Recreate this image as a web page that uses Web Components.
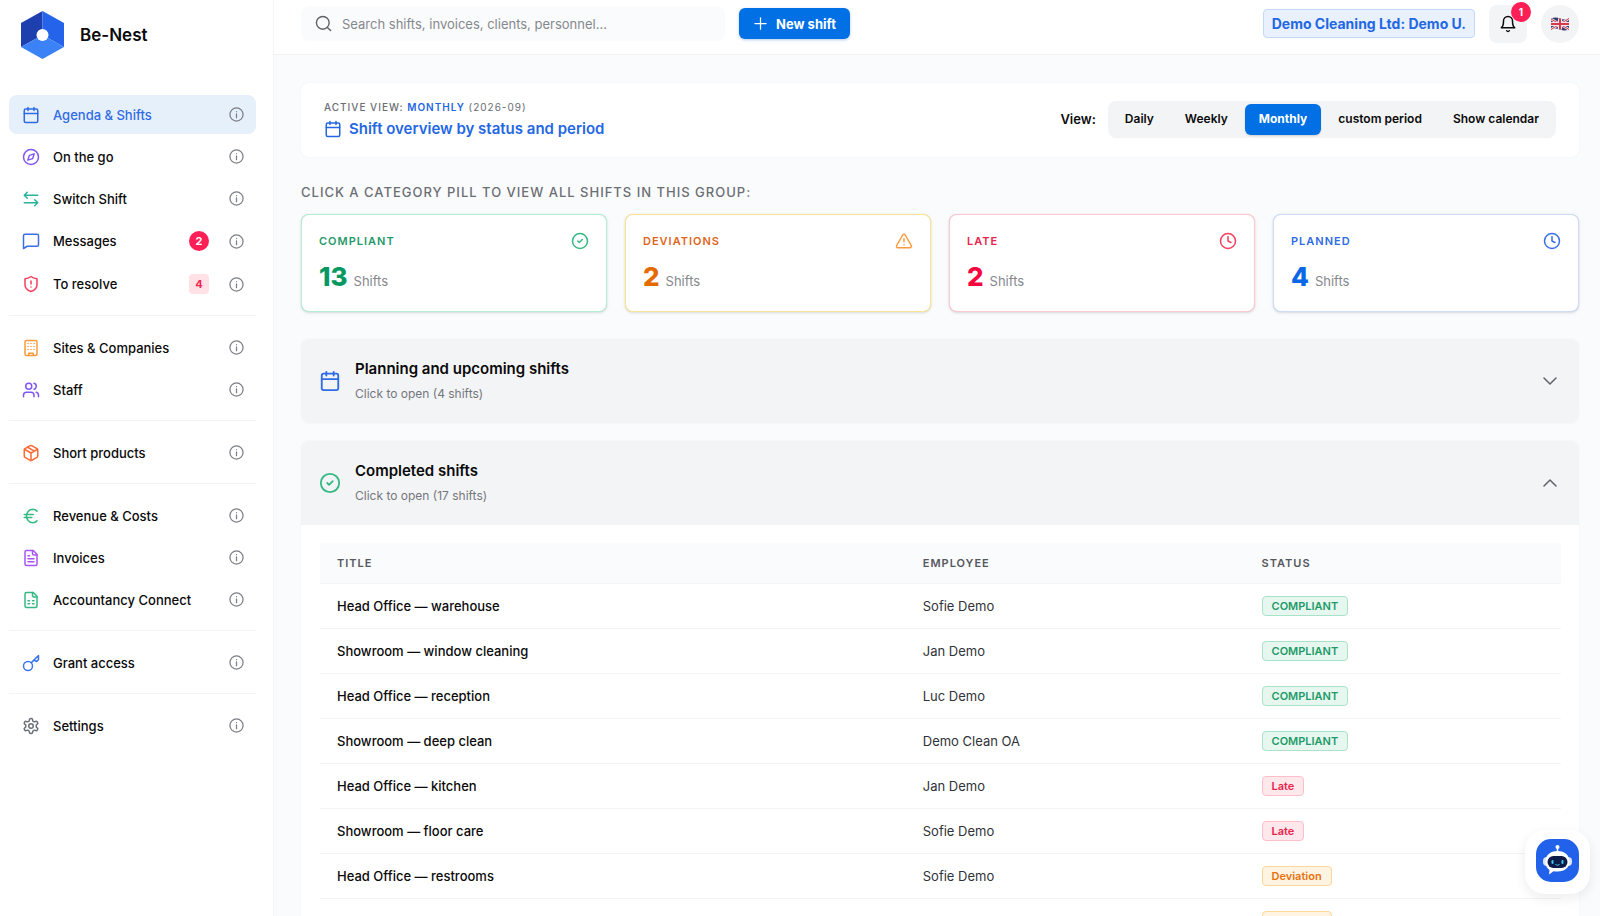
<!DOCTYPE html>
<html lang="en">
<head>
<meta charset="utf-8">
<meta name="viewport" content="width=device-width, initial-scale=1">
<title>Be-Nest</title>
<style>
  html, body {
    margin: 0;
    height: 100%;
  }

  body {
    font-family: Inter, "Liberation Sans", sans-serif;
    font-size: 13px;
    color: #0a0a0a;
    background: #fafbfc;
    overflow: hidden;
  }
</style>
</head>
<body>
<benest-app></benest-app>

<script>
const icons = {
  calendar: '<rect x="3" y="4" width="18" height="18" rx="2"/><path d="M3 10h18M8 2v4M16 2v4"/>',
  compass: '<circle cx="12" cy="12" r="10"/><path d="m16.200 7.800-2 6.400-6.400 2 2-6.400z"/>',
  swap: '<path d="M21 7H3m4-4L3 7l4 4M3 17h18m-4-4 4 4-4 4"/>',
  message: '<path d="M22 17a2 2 0 0 1-2 2H7l-5 3V5a2 2 0 0 1 2-2h16a2 2 0 0 1 2 2z"/>',
  shield: '<path d="M20 13c0 5-3.500 7.500-8 9-4.500-1.500-8-4-8-9V5c3 0 6-1.500 8-3 2 1.500 5 3 8 3z"/><path d="M12 8v4M12 16h.01"/>',
  building: '<rect x="4" y="2" width="16" height="20" rx="2"/><path d="M9 22v-3h6v3M8 6h.01M12 6h.01M16 6h.01M8 10h.01M12 10h.01M16 10h.01M8 14h.01M12 14h.01M16 14h.01"/>',
  users: '<path d="M16 21v-2a4 4 0 0 0-4-4H6a4 4 0 0 0-4 4v2"/><circle cx="9" cy="7" r="4"/><path d="M22 21v-2a4 4 0 0 0-3-3.870M16 3.130a4 4 0 0 1 0 7.750"/>',
  box: '<path d="M21 16V8a2 2 0 0 0-1-1.730l-7-4a2 2 0 0 0-2 0l-7 4A2 2 0 0 0 3 8v8a2 2 0 0 0 1 1.730l7 4a2 2 0 0 0 2 0l7-4A2 2 0 0 0 21 16z"/><path d="m3.300 7 8.700 5 8.700-5M12 22V12M7.500 4.300l9 5.100"/>',
  euro: '<path d="M3 10h12M3 14h10M20 5.500A8.500 8.500 0 0 0 14.500 3C9.500 3 6 7 6 12s3.500 9 8.500 9c2.200 0 4-.9 5.500-2.500"/>',
  file: '<path d="M15 2H6a2 2 0 0 0-2 2v16a2 2 0 0 0 2 2h12a2 2 0 0 0 2-2V7z"/><path d="M14 2v4a2 2 0 0 0 2 2h4M8 9h2M8 13h8M8 17h8"/>',
  sheet: '<path d="M15 2H6a2 2 0 0 0-2 2v16a2 2 0 0 0 2 2h12a2 2 0 0 0 2-2V7z"/><path d="M14 2v4a2 2 0 0 0 2 2h4M8 13h2M14 13h2M8 17h2M14 17h2"/>',
  key: '<circle cx="8" cy="16" r="6"/><path d="M12.500 11.500 22 2v5.500l-2.500 2.500-3.500-2"/>',
  gear: '<path d="M12.220 2h-.44a2 2 0 0 0-2 2v.18a2 2 0 0 1-1 1.730l-.43.25a2 2 0 0 1-2 0l-.15-.08a2 2 0 0 0-2.730.73l-.22.38a2 2 0 0 0 .73 2.730l.15.1a2 2 0 0 1 1 1.720v.51a2 2 0 0 1-1 1.740l-.15.09a2 2 0 0 0-.73 2.730l.22.38a2 2 0 0 0 2.730.73l.15-.08a2 2 0 0 1 2 0l.43.25a2 2 0 0 1 1 1.730V20a2 2 0 0 0 2 2h.44a2 2 0 0 0 2-2v-.18a2 2 0 0 1 1-1.730l.43-.25a2 2 0 0 1 2 0l.15.08a2 2 0 0 0 2.730-.73l.22-.39a2 2 0 0 0-.73-2.730l-.15-.08a2 2 0 0 1-1-1.740v-.5a2 2 0 0 1 1-1.740l.15-.09a2 2 0 0 0 .73-2.730l-.22-.38a2 2 0 0 0-2.730-.73l-.15.08a2 2 0 0 1-2 0l-.43-.25a2 2 0 0 1-1-1.730V4a2 2 0 0 0-2-2z"/><circle cx="12" cy="12" r="3"/>',
  info: '<circle cx="12" cy="12" r="10.500"/><path d="M12 17v-6M12 7.500h.01"/>',
  search: '<circle cx="11" cy="11" r="9"/><path d="m22 22-4.500-4.500"/>',
  plus: '<path d="M3 12h18M12 3v18"/>',
  bell: '<path d="M6 8a6 6 0 0 1 12 0c0 7 3 9 3 9H3s3-2 3-9M10.300 21a1.940 1.940 0 0 0 3.400 0"/>',
  check: '<circle cx="12" cy="12" r="10"/><path d="m9 12 2 2 4-4"/>',
  warning: '<path d="m21.730 18-8-14a2 2 0 0 0-3.480 0l-8 14A2 2 0 0 0 4 21h16a2 2 0 0 0 1.730-3z"/><path d="M12 9v4M12 17h.01"/>',
  clock: '<circle cx="12" cy="12" r="10"/><path d="M12 6v6l4 2"/>',
  down: '<path d="m4 8 8 8 8-8"/>',
  up: '<path d="m4 16 8-8 8 8"/>'
};

class BenestIcon extends HTMLElement {
  constructor() {
    super();
    this.attachShadow({ mode: "open" });
  }

  connectedCallback() {
    const size = this.getAttribute("size") || 18;
    const weight = this.getAttribute("weight") || 2;
    this.shadowRoot.innerHTML = `
      <style>
        :host { display: inline-flex; flex: none; }
        svg { display: block; }
      </style>
      <svg width="${size}" height="${size}" viewBox="0 0 24 24" fill="none" stroke="currentColor"
        stroke-width="${weight}" stroke-linecap="round" stroke-linejoin="round" aria-hidden="true">
        ${icons[this.getAttribute("name")]}
      </svg>`;
  }
}

class NavItem extends HTMLElement {
  constructor() {
    super();
    this.attachShadow({ mode: "open" });
  }

  connectedCallback() {
    const tint = this.getAttribute("tint");
    this.shadowRoot.innerHTML = `
      <style>
        :host { display: block; }
        .row {
          display: flex;
          align-items: center;
          gap: 20px;
          min-height: 39px;
          padding: 0 12px 0 13px;
          border-radius: 8px;
        }
        :host([active]) .row { background: #e6f0fb; }
        :host([active]) a { color: #2f6be4; }
        :host([tall]) .row { min-height: 40px; }
        a {
          flex: 1;
          display: flex;
          align-items: center;
          gap: 13px;
          color: inherit;
          font-weight: 500;
          text-decoration: none;
        }
        button {
          display: flex;
          border: 0;
          padding: 0;
          background: none;
          color: #7c7f85;
        }
      </style>
      <div class="row">
        <a href="#"><benest-icon name="${this.getAttribute("icon")}" style="color:${tint}"></benest-icon><slot></slot></a>
        <slot name="badge"></slot>
        <button aria-label="More information"><benest-icon name="info" size="15"></benest-icon></button>
      </div>`;
  }
}

class SideBar extends HTMLElement {
  constructor() {
    super();
    this.attachShadow({ mode: "open" });
    this.shadowRoot.innerHTML = `
      <style>
        :host {
          display: block;
          box-sizing: border-box;
          background: #fff;
          border-right: 1px solid #f3f4f6;
          padding: 10px 17px 0 9px;
        }
        .brand {
          display: flex;
          align-items: center;
          gap: 16px;
          padding: 0 12px;
          margin-bottom: 35px;
          font-size: 17px;
          font-weight: 600;
        }
        nav {
          display: flex;
          flex-direction: column;
          gap: 3px;
        }
        hr {
          width: 100%;
          height: 1px;
          margin: 8px 0 9px;
          border: 0;
          background: #f3f4f6;
        }
        .dot, .tag {
          height: 20px;
          min-width: 20px;
          line-height: 20px;
          text-align: center;
          font-size: 11px;
          font-weight: 700;
        }
        .dot {
          border-radius: 10px;
          background: #ff1f57;
          color: #fff;
        }
        .tag {
          border-radius: 4px;
          background: #ffe1e6;
          color: #f0284f;
        }
      </style>
      <div class="brand">
        <svg width="43" height="50" viewBox="0 0 43 50" aria-hidden="true">
          <path d="M21.500 1 0 13v24l21.500-12z" fill="#1e40af"/>
          <path d="M21.500 1 43 13v24L21.500 25z" fill="#2563eb"/>
          <path d="M0 37l21.500-12L43 37 21.500 49z" fill="#3b82f6"/>
          <circle cx="21.500" cy="25" r="6" fill="#fff"/>
        </svg>
        Be-Nest
      </div>
      <nav>
        <nav-item active icon="calendar" tint="#2f6be4">Agenda &amp; Shifts</nav-item>
        <nav-item icon="compass" tint="#8257f5">On the go</nav-item>
        <nav-item icon="swap" tint="#2bb39a">Switch Shift</nav-item>
        <nav-item tall icon="message" tint="#3b6fe8">Messages<span slot="badge" class="dot">2</span></nav-item>
        <nav-item tall icon="shield" tint="#f43f5e">To resolve<span slot="badge" class="tag">4</span></nav-item>
        <hr>
        <nav-item icon="building" tint="#fb9a3c">Sites &amp; Companies</nav-item>
        <nav-item icon="users" tint="#8257f5">Staff</nav-item>
        <hr>
        <nav-item icon="box" tint="#fb6a34">Short products</nav-item>
        <hr>
        <nav-item icon="euro" tint="#34b985">Revenue &amp; Costs</nav-item>
        <nav-item icon="file" tint="#a855f7">Invoices</nav-item>
        <nav-item icon="sheet" tint="#34b985">Accountancy Connect</nav-item>
        <hr>
        <nav-item icon="key" tint="#3b76ee">Grant access</nav-item>
        <hr>
        <nav-item icon="gear" tint="#6b7078">Settings</nav-item>
      </nav>`;
  }
}

class TopBar extends HTMLElement {
  constructor() {
    super();
    this.attachShadow({ mode: "open" });
    this.shadowRoot.innerHTML = `
      <style>
        :host {
          display: flex;
          align-items: center;
          box-sizing: border-box;
          height: 55px;
          padding: 0 21px 7px 27px;
          gap: 14px;
          background: #fff;
          border-bottom: 1px solid #eff1f3;
        }
        button { font: inherit; border: 0; padding: 0; }
        label {
          display: flex;
          align-items: center;
          gap: 10px;
          box-sizing: border-box;
          width: 424px;
          height: 35px;
          padding: 0 14px;
          border-radius: 8px;
          background: #fafbfc;
          color: #5f6368;
        }
        input {
          flex: 1;
          min-width: 0;
          padding: 0;
          border: 0;
          outline: 0;
          background: none;
          font: inherit;
        }
        input::placeholder { color: #85888d; opacity: 1; }
        .new {
          display: flex;
          align-items: center;
          gap: 8px;
          height: 31px;
          padding: 0 14px;
          border-radius: 6px;
          background: #0070e4;
          color: #fff;
          font-weight: 700;
          box-shadow: 0 1px 3px rgba(0, 80, 200, .3);
        }
        .account {
          box-sizing: border-box;
          height: 29px;
          margin-left: auto;
          padding: 0 8px;
          border: 1px solid #c3d9fa;
          border-radius: 4px;
          background: #e8f1fd;
          color: #2467e3;
          font-size: 14px;
          font-weight: 700;
        }
        .bell, .lang {
          position: relative;
          display: flex;
          align-items: center;
          justify-content: center;
          width: 38px;
          height: 38px;
          border-radius: 8px;
          background: #f3f4f6;
          color: #0a0a0a;
        }
        .lang { border-radius: 50%; }
        .count {
          position: absolute;
          top: -3px;
          right: -4px;
          width: 20px;
          height: 20px;
          border-radius: 50%;
          background: #ff1f57;
          color: #fff;
          font-size: 10px;
          font-weight: 700;
          line-height: 20px;
        }
      </style>
      <label>
        <benest-icon name="search" size="17"></benest-icon>
        <input type="search" aria-label="Search" placeholder="Search shifts, invoices, clients, personnel...">
      </label>
      <button class="new"><benest-icon name="plus" size="15" weight="2"></benest-icon>New shift</button>
      <button class="account">Demo Cleaning Ltd: Demo U.</button>
      <button class="bell" aria-label="Notifications"><benest-icon name="bell"></benest-icon><span class="count">1</span></button>
      <button class="lang" aria-label="Language">
        <svg width="18" height="14" viewBox="0 0 18 14" aria-hidden="true">
          <path d="M0 1.500q4.500-2 9 0t9 0v11q-4.500 2-9 0t-9 0z" fill="#33406f"/>
          <path d="M0 2 18 12.500M18 1.500 0 12.500" stroke="#f3e9ee" stroke-width="2.500"/>
          <path d="M0 2 18 12.500M18 1.500 0 12.500" stroke="#d5394b"/>
          <path d="M9 1.500v11M0 7h18" stroke="#f3e9ee" stroke-width="4"/>
          <path d="M9 1.500v11M0 7h18" stroke="#d5394b" stroke-width="2"/>
        </svg>
      </button>`;
  }
}

class ViewPanel extends HTMLElement {
  constructor() {
    super();
    this.attachShadow({ mode: "open" });
    this.shadowRoot.innerHTML = `
      <style>
        :host {
          display: flex;
          align-items: center;
          justify-content: space-between;
          box-sizing: border-box;
          min-height: 74px;
          padding: 0 23px 2px;
          border-radius: 8px;
          background: #fff;
          box-shadow: 0 0 2px rgba(20, 30, 50, .06);
        }
        .over {
          font-size: 10px;
          line-height: 16px;
          color: #6b6e73;
          font-weight: 500;
          letter-spacing: 1px;
        }
        .over b { color: #2467e3; font-weight: 600; }
        .over span { font-weight: 400; }
        h1 {
          display: flex;
          align-items: center;
          gap: 7px;
          margin: 3px 0 0;
          font-size: 15px;
          line-height: 22px;
          font-weight: 600;
          color: #2467e3;
        }
        .switch {
          display: flex;
          align-items: center;
          gap: 12px;
          font-weight: 600;
        }
        .tabs {
          display: flex;
          gap: 3px;
          padding: 3px;
          border-radius: 8px;
          background: #f3f4f6;
        }
        button {
          height: 31px;
          padding: 0 14px 2px;
          border: 0;
          border-radius: 6px;
          background: none;
          color: inherit;
          font: inherit;
          font-size: 12px;
        }
        button[aria-pressed] {
          background: #0070e4;
          color: #fff;
          font-weight: 700;
          box-shadow: 0 1px 2px rgba(0, 0, 0, .15);
        }
      </style>
      <div>
        <div class="over">ACTIVE VIEW: <b>MONTHLY</b> <span>(2026-09)</span></div>
        <h1><benest-icon name="calendar"></benest-icon>Shift overview by status and period</h1>
      </div>
      <div class="switch">
        View:
        <div class="tabs">
          <button>Daily</button>
          <button>Weekly</button>
          <button aria-pressed="true">Monthly</button>
          <button>custom period</button>
          <button>Show calendar</button>
        </div>
      </div>`;
  }
}

class StatCard extends HTMLElement {
  constructor() {
    super();
    this.attachShadow({ mode: "open" });
  }

  connectedCallback() {
    this.shadowRoot.innerHTML = `
      <style>
        :host { display: block; }
        button {
          display: block;
          box-sizing: border-box;
          width: 100%;
          height: 98px;
          padding: 15px 17px;
          border: 1px solid var(--edge);
          border-radius: 8px;
          background: #fff;
          box-shadow: 0 1px 3px rgba(20, 30, 50, .14), 0 0 1px var(--edge);
          color: var(--text);
          font: inherit;
          text-align: left;
        }
        .top {
          display: flex;
          align-items: center;
          justify-content: space-between;
          height: 22px;
          font-size: 11px;
          font-weight: 600;
          letter-spacing: 1px;
        }
        .top benest-icon { color: var(--mark); }
        .bottom {
          display: flex;
          align-items: baseline;
          gap: 6px;
          margin-top: 8px;
          line-height: 34px;
          color: #85888d;
        }
        b { font-size: 26px; font-weight: 800; color: var(--value); }
      </style>
      <button>
        <span class="top"><slot></slot><benest-icon name="${this.getAttribute("icon")}"></benest-icon></span>
        <span class="bottom"><b>${this.getAttribute("value")}</b>Shifts</span>
      </button>`;
  }
}

class ShiftGroup extends HTMLElement {
  constructor() {
    super();
    this.attachShadow({ mode: "open" });
  }

  connectedCallback() {
    const open = this.hasAttribute("open");
    this.shadowRoot.innerHTML = `
      <style>
        :host {
          display: block;
          border-radius: 8px;
          background: #fff;
          box-shadow: 0 0 2px rgba(20, 30, 50, .06);
          overflow: hidden;
        }
        button {
          display: flex;
          align-items: center;
          gap: 14px;
          width: 100%;
          height: 84px;
          padding: 0 20px 0 18px;
          border: 0;
          background: #f3f4f6;
          color: #5f6368;
          font: inherit;
          text-align: left;
        }
        .text { flex: 1; padding-bottom: 2px; }
        strong {
          display: block;
          font-size: 15px;
          line-height: 24px;
          font-weight: 600;
          color: #0a0a0a;
        }
        small {
          display: block;
          margin-top: 3px;
          font-size: 12px;
          line-height: 20px;
          color: #74777c;
        }
      </style>
      <button aria-expanded="${open}">
        <benest-icon name="${this.getAttribute("icon")}" size="22" style="color:${this.getAttribute("tint")}"></benest-icon>
        <span class="text"><strong>${this.getAttribute("heading")}</strong><small>Click to open (${this.getAttribute("count")} shifts)</small></span>
        <benest-icon name="${open ? "up" : "down"}" size="18"></benest-icon>
      </button>
      <slot></slot>`;
  }
}

const shifts = [
  ["Head Office — warehouse", "Sofie Demo", "COMPLIANT"],
  ["Showroom — window cleaning", "Jan Demo", "COMPLIANT"],
  ["Head Office — reception", "Luc Demo", "COMPLIANT"],
  ["Showroom — deep clean", "Demo Clean OA", "COMPLIANT"],
  ["Head Office — kitchen", "Jan Demo", "Late"],
  ["Showroom — floor care", "Sofie Demo", "Late"],
  ["Head Office — restrooms", "Sofie Demo", "Deviation"],
  ["Showroom — entrance", "Demo Clean OA", "Deviation"]
];

class ShiftTable extends HTMLElement {
  constructor() {
    super();
    this.attachShadow({ mode: "open" });
    const rows = shifts.map(([title, person, status]) => `
      <tr><td>${title}</td><td>${person}</td><td><span class="${status.toLowerCase()}">${status}</span></td></tr>`);
    this.shadowRoot.innerHTML = `
      <style>
        :host { display: block; padding: 18px 18px 0 19px; }
        table {
          width: 100%;
          table-layout: fixed;
          border-collapse: separate;
          border-spacing: 0;
        }
        th, td {
          box-sizing: border-box;
          padding: 0 17px;
          text-align: left;
          border-bottom: 1px solid #f3f4f6;
        }
        th {
          height: 41px;
          background: #fafbfc;
          color: #55585e;
          font-size: 11px;
          font-weight: 600;
          letter-spacing: 1px;
        }
        th:nth-child(1) { width: 47.2%; }
        th:nth-child(2) { width: 27.3%; }
        td { height: 45px; color: #303338; }
        td:first-child { color: #0a0a0a; font-weight: 500; }
        span {
          display: inline-block;
          padding: 0 9px;
          border: 1px solid;
          border-radius: 4px;
          font-size: 11px;
          line-height: 18px;
          font-weight: 600;
        }
        .compliant { color: #1f9a68; background: #e5f7ef; border-color: #a9e2c9; }
        .late { color: #e8244b; background: #ffe8ec; border-color: #ffbfca; }
        .deviation { color: #e8700e; background: #fff4e2; border-color: #ffd79a; }
      </style>
      <table>
        <thead><tr><th>TITLE</th><th>EMPLOYEE</th><th>STATUS</th></tr></thead>
        <tbody>${rows.join("")}</tbody>
      </table>`;
  }
}

class ChatBot extends HTMLElement {
  constructor() {
    super();
    this.attachShadow({ mode: "open" });
    this.shadowRoot.innerHTML = `
      <style>
        :host { position: fixed; right: 10px; bottom: 22px; }
        button {
          display: flex;
          padding: 9px 11px 12px;
          border: 0;
          border-radius: 20px;
          background: #fff;
          box-shadow: 0 4px 12px rgba(20, 30, 50, .08);
        }
      </style>
      <button aria-label="Open assistant">
        <svg width="43" height="43" viewBox="0 0 43 43" aria-hidden="true">
          <rect width="43" height="43" rx="15" fill="#2262ea"/>
          <path d="M21.500 8v6" stroke="#fff" stroke-width="1.500"/>
          <circle cx="21.500" cy="8" r="2" fill="#fff"/>
          <rect x="7" y="18" width="29" height="9" rx="4" fill="#dbe6fb"/>
          <path d="M21.500 12C14 12 9.500 16.500 9.500 22.500c0 4 1.500 7 4 8.500l-.5 4.500 4.500-3.300c1 .3 2.500.4 4 .4 7.500 0 12-4 12-10S29 12 21.500 12z" fill="#fff"/>
          <rect x="11.500" y="17" width="20" height="12" rx="6" fill="#0c1b47"/>
          <rect x="15.500" y="21" width="2" height="4" rx="1" fill="#3cc8f5"/>
          <rect x="25.500" y="21" width="2" height="4" rx="1" fill="#3cc8f5"/>
          <path d="M19.500 25.500q2 1.500 4 0" fill="none" stroke="#3cc8f5"/>
        </svg>
      </button>`;
  }
}

class BenestApp extends HTMLElement {
  constructor() {
    super();
    this.attachShadow({ mode: "open" });
    this.shadowRoot.innerHTML = `
      <style>
        :host {
          display: grid;
          grid-template-columns: 274px minmax(0, 1fr);
          height: 100vh;
          overflow: hidden;
        }
        .page {
          display: flex;
          flex-direction: column;
          min-height: 0;
        }
        main {
          flex: 1;
          min-height: 0;
          overflow: hidden;
          padding: 28px 21px 0 27px;
        }
        h2 {
          margin: 25px 0 12px;
          font-size: 13px;
          line-height: 20px;
          font-weight: 500;
          color: #6b6e73;
          letter-spacing: 1px;
        }
        .stats {
          display: grid;
          grid-template-columns: repeat(4, 1fr);
          gap: 18px;
          margin-bottom: 27px;
        }
        shift-group + shift-group { margin-top: 18px; }
        .ok { --edge: #b5eed4; --text: #1f9a68; --mark: #34b985; --value: #059862; }
        .warn { --edge: #fbe49a; --text: #e0661c; --mark: #fb9a3c; --value: #e56a00; }
        .late { --edge: #fcc9d2; --text: #e8244b; --mark: #f43f5e; --value: #f5063f; }
        .plan { --edge: #cfdcf8; --text: #2f6be4; --mark: #3b6fe8; --value: #0a68e6; }
      </style>
      <side-bar></side-bar>
      <div class="page">
        <top-bar></top-bar>
        <main>
          <view-panel></view-panel>
          <h2>CLICK A CATEGORY PILL TO VIEW ALL SHIFTS IN THIS GROUP:</h2>
          <div class="stats">
            <stat-card class="ok" icon="check" value="13">COMPLIANT</stat-card>
            <stat-card class="warn" icon="warning" value="2">DEVIATIONS</stat-card>
            <stat-card class="late" icon="clock" value="2">LATE</stat-card>
            <stat-card class="plan" icon="clock" value="4">PLANNED</stat-card>
          </div>
          <shift-group icon="calendar" tint="#2f6be4" heading="Planning and upcoming shifts" count="4"></shift-group>
          <shift-group open icon="check" tint="#34b985" heading="Completed shifts" count="17">
            <shift-table></shift-table>
          </shift-group>
        </main>
      </div>
      <chat-bot></chat-bot>`;
  }
}

customElements.define("benest-icon", BenestIcon);
customElements.define("nav-item", NavItem);
customElements.define("side-bar", SideBar);
customElements.define("top-bar", TopBar);
customElements.define("view-panel", ViewPanel);
customElements.define("stat-card", StatCard);
customElements.define("shift-group", ShiftGroup);
customElements.define("shift-table", ShiftTable);
customElements.define("chat-bot", ChatBot);
customElements.define("benest-app", BenestApp);
</script>
</body>
</html>
